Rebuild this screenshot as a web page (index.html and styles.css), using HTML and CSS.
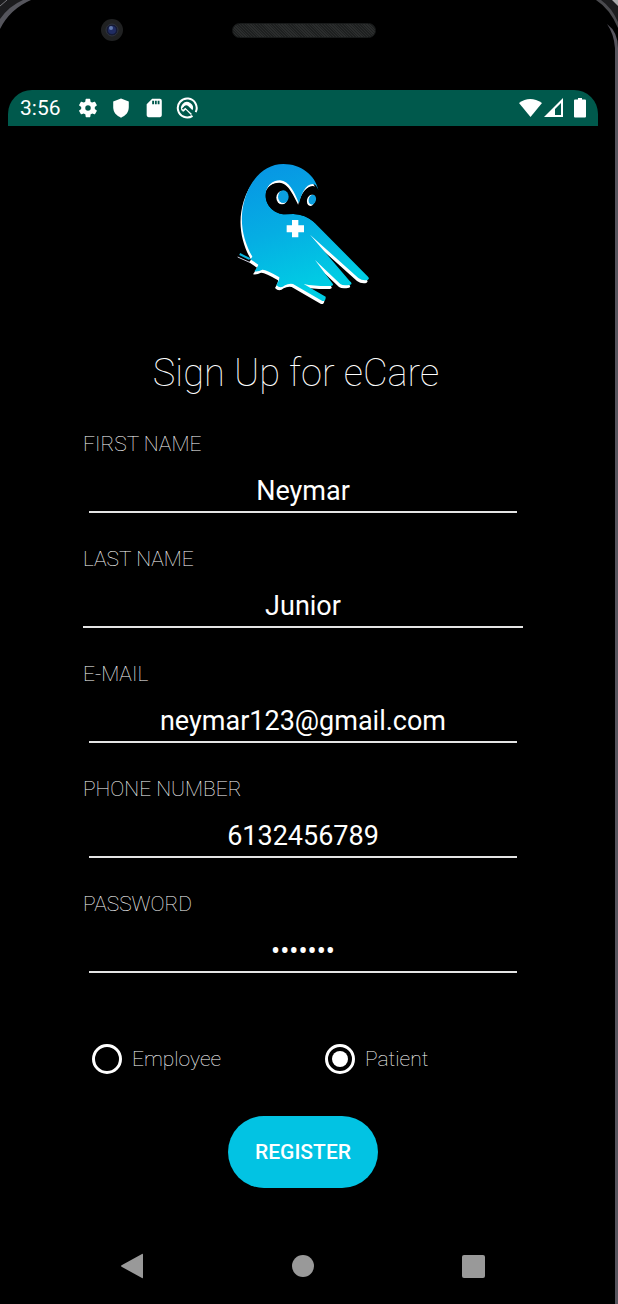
FILE: index.html
```html
<!DOCTYPE html>
<html lang="en">
<head>
<meta charset="utf-8">
<meta name="viewport" content="width=device-width, initial-scale=1">
<title>eCare – Sign Up</title>
<link rel="stylesheet" href="styles.css">
</head>
<body>
<div class="device">
  <svg class="corner corner-left" width="32" height="32" viewBox="0 0 32 32" aria-hidden="true">
    <path d="M0 0H31Q10 9 0 29Z" fill="#55555c"/>
    <path d="M0 0H23Q9 6 0 19Z" fill="#1c1c1e"/>
    <path d="M0 6L7 0" stroke="#77777c" stroke-width="1"/>
  </svg>
  <svg class="corner corner-right" width="32" height="48" viewBox="0 0 32 48" aria-hidden="true">
    <path d="M10 0H32V28Q24 9 10 0Z" fill="#4a4a4e"/>
    <path d="M15 0H32V22Q26 8 15 0Z" fill="#1c1c1e"/>
    <path d="M26 0H32V6Z" fill="#a8a8aa"/>
    <path d="M21 24Q32 32 32 48H29Q28 34 21 24Z" fill="#57555e"/>
  </svg>
  <div class="edge"></div>
  <header class="bezel">
    <svg class="camera" width="24" height="24" viewBox="0 0 24 24" aria-hidden="true">
      <circle cx="12" cy="12" r="11" fill="#202122"/>
      <circle cx="12" cy="12" r="6" fill="#151a35" stroke="#30343d"/>
      <circle cx="12" cy="12" r="4" fill="#202c62"/>
      <circle cx="11" cy="10" r="2" fill="#6077a9"/>
    </svg>
    <div class="speaker"></div>
  </header>

  <div class="screen">
    <div class="status">
      <span class="clock">3:56</span>
      <div class="notices">
        <svg width="22" height="22" viewBox="0 0 24 24" aria-label="Settings"><path fill-rule="evenodd" d="M19.4 13a7.500 7.500 0 0 0 0-2l2.100-1.600a.5.5 0 0 0 .1-.7l-2-3.400a.5.5 0 0 0-.6-.2l-2.500 1a7.300 7.300 0 0 0-1.700-1l-.4-2.600a.5.5 0 0 0-.5-.5h-4a.5.5 0 0 0-.5.5L9 5.100a7.700 7.700 0 0 0-1.700 1l-2.400-1a.5.5 0 0 0-.6.200l-2 3.400a.5.5 0 0 0 .1.700L4.600 11a8 8 0 0 0 0 2l-2.200 1.600a.5.5 0 0 0-.1.700l2 3.400c.1.200.4.300.6.200l2.500-1a7.300 7.300 0 0 0 1.700 1l.4 2.600c0 .3.200.5.5.5h4c.2 0 .5-.2.500-.5l.4-2.600a7.700 7.700 0 0 0 1.700-1l2.400 1c.2.100.5 0 .6-.2l2-3.400a.5.5 0 0 0-.1-.7zM12 15a3 3 0 1 1 0-6 3 3 0 0 1 0 6z"/></svg>
        <svg width="22" height="22" viewBox="0 0 24 24" aria-label="Protected"><path d="M12 1.500l8.500 3.500v6c0 6-3.500 9.500-8.500 11.500C7 20.500 3.500 17 3.500 11V5z"/></svg>
        <svg width="22" height="22" viewBox="0 0 24 24" aria-label="SD card"><path fill-rule="evenodd" d="M18.500 2H10L4 8v12a2 2 0 0 0 2 2h12.500a2 2 0 0 0 2-2V4a2 2 0 0 0-2-2zM12 8h-2V4h2zm3 0h-2V4h2zm3 0h-2V4h2z"/></svg>
        <svg width="22" height="22" viewBox="0 0 24 24" aria-label="Debugging"><path d="M18 20.500A10.300 10.300 0 1 1 21.500 16.500" fill="none" stroke="#fff" stroke-width="2.200"/><path d="M7 16A6.500 6.500 0 1 1 18 14.500L13 9.500Q10 8 8.500 11Z"/><path d="M7.500 15.500L10.500 12.500L17 19" fill="none" stroke="#fff" stroke-width="2"/><path d="M7 13L10 10.500L18 18" fill="none" stroke="#00594c" stroke-width="1.500"/></svg>
      </div>
      <div class="signals">
        <svg width="23" height="20" viewBox="0 0 23 20" aria-label="Wi-Fi"><path d="M0 5Q11 -3 23 5L11.500 19Z"/></svg>
        <svg width="20" height="20" viewBox="0 0 20 20" aria-label="Mobile signal"><path fill-rule="evenodd" d="M0 19L19 0V19ZM11 17H17V5L11 11Z"/></svg>
        <svg class="battery" width="12" height="20" viewBox="0 0 12 20" aria-label="Battery"><path d="M4 0H8V1.500H11Q12 1.500 12 2.500V18.500Q12 19.500 11 19.500H1Q0 19.500 0 18.500V2.500Q0 1.500 1 1.500H4Z"/></svg>
      </div>
    </div>

    <main class="content">
      <svg class="logo" width="138" height="165" viewBox="27 0 414 495" role="img" aria-label="eCare owl">
        <defs>
          <linearGradient id="sky" x1="0.3" y1="0" x2="0.6" y2="1">
            <stop offset="0" stop-color="#0797e4"/>
            <stop offset="0.45" stop-color="#05aee3"/>
            <stop offset="0.9" stop-color="#00cde4"/>
          </linearGradient>
          <path id="owl" d="M280 120C270 75 228 42 175 42C122 42 78 84 60 145C40 210 54 270 82 320L76 328L100 344Q98 350 88 364Q100 366 112 359Q124 358 163 382Q164 388 154 405Q166 418 180 406Q190 400 204 402L292 453Q303 454 302 440L236 402Q270 409 318 408Q328 406 322 400L270 330L346 402Q356 409 376 404Q384 401 374 393L255 254L400 384Q412 393 428 390Q435 386 429 380L264 214Q240 193 205 192L180 193C150 193 122 168 122 136C122 108 142 91 165 91C193 93 207 125 222 160C230 132 240 102 264 102C273 103 276 112 280 120Z"/>
        </defs>
        <use href="#owl" x="-4" y="9" fill="#fff"/>
        <use href="#owl" fill="url(#sky)"/>
        <path d="M122 138C122 110 142 98 163 98C192 100 205 137 223 170C230 139 243 108 262 108Q274 108 281 122L300 150L270 218Q240 193 205 192L180 193C150 193 122 168 122 138Z" fill="#000"/>
        <ellipse cx="171" cy="143" rx="17" ry="20" fill="#fff"/>
        <ellipse cx="175" cy="140" rx="16" ry="19" fill="#0b9fdf"/>
        <ellipse cx="258" cy="151" rx="12" ry="17" fill="#fff" transform="rotate(15 258 151)"/>
        <ellipse cx="262" cy="149" rx="11" ry="15" fill="#0b9fdf" transform="rotate(15 262 149)"/>
        <path d="M201 210H220V226H237V247H220V262H201V247H185V226H201Z" fill="#fff"/>
        <path d="M44 312L74 327" stroke="#09b5df" stroke-width="6"/>
        <path d="M38 321L74 337" stroke="#ccd" stroke-width="3"/>
      </svg>

      <h1 class="title">Sign Up for eCare</h1>

      <form class="form">
        <div class="field">
          <label for="first">FIRST NAME</label>
          <input id="first" type="text" value="Neymar">
        </div>
        <div class="field wide">
          <label for="last">LAST NAME</label>
          <input id="last" type="text" value="Junior">
        </div>
        <div class="field">
          <label for="email">E-MAIL</label>
          <input id="email" type="email" value="neymar123@gmail.com">
        </div>
        <div class="field">
          <label for="phone">PHONE NUMBER</label>
          <input id="phone" type="tel" value="6132456789">
        </div>
        <div class="field">
          <label for="password">PASSWORD</label>
          <input id="password" type="password" value="neymar1">
        </div>
        <div class="roles">
          <label class="role"><input type="radio" name="role" value="employee">Employee</label>
          <label class="role"><input type="radio" name="role" value="patient" checked>Patient</label>
        </div>
        <button class="register" type="button">REGISTER</button>
      </form>
    </main>

    <nav class="nav">
      <button type="button" aria-label="Back"><svg width="24" height="26" viewBox="0 0 24 26"><path d="M22 1Q23 0 23 2V24Q23 26 22 25L2 14Q0 13 2 12Z"/></svg></button>
      <button type="button" aria-label="Home"><svg width="24" height="26" viewBox="0 0 24 26"><circle cx="12" cy="13" r="11"/></svg></button>
      <button type="button" aria-label="Recent apps"><svg width="24" height="26" viewBox="0 0 24 26"><rect x="0" y="2" width="23" height="23" rx="2"/></svg></button>
    </nav>
  </div>
</div>
</body>
</html>
```

FILE: styles.css
```css
* { box-sizing: border-box; }

body {
  margin: 0;
  background: #000;
  color: #fff;
  font-family: Roboto, "Liberation Sans", sans-serif;
}

.device {
  position: relative;
  display: flex;
  flex-direction: column;
  min-height: 100vh;
  padding: 0 20px 0 8px;
  background: #000;
}

.corner { position: absolute; top: 0; }
.corner-left { left: 0; }
.corner-right { right: 0; }

.edge {
  position: absolute;
  top: 48px;
  right: 0;
  bottom: 0;
  width: 3px;
  background: #57555e;
}

.bezel {
  display: grid;
  grid-template-columns: 1fr 144px 1fr;
  align-items: center;
  height: 90px;
  padding: 0 0 30px 2px;
}

.camera {
  justify-self: center;
  margin-right: 18px;
}

.speaker {
  height: 15px;
  border: 1px solid #181a1a;
  border-radius: 8px;
  background: repeating-linear-gradient(45deg, #1e2020 0 1px, #2b2d2d 1px 2px);
}

.screen {
  display: flex;
  flex: 1;
  flex-direction: column;
}

.status {
  display: flex;
  align-items: center;
  height: 36px;
  padding: 0 12px;
  border-radius: 24px 24px 0 0;
  background: #00594c;
  fill: #fff;
}

.clock {
  font-size: 21px;
  line-height: 36px;
}

.notices {
  display: flex;
  gap: 11px;
  margin-left: 16px;
}

.signals {
  display: flex;
  gap: 2px;
  margin-left: auto;
}

.battery { margin-left: 8px; }

.content {
  display: flex;
  flex-direction: column;
  align-items: center;
  padding-top: 24px;
}

.title {
  margin: 34px 0 0;
  padding-right: 14px;
  font-size: 38px;
  font-weight: 100;
  line-height: 48px;
}

.form {
  display: flex;
  flex-direction: column;
  gap: 32px;
  width: 100%;
  max-width: 440px;
  margin-top: 34px;
}

.field {
  display: flex;
  flex-direction: column;
  gap: 13px;
}

.field + .field { margin-top: 1px; }

.field label {
  font-size: 21px;
  font-weight: 100;
  line-height: 26px;
}

.field input {
  height: 43px;
  margin: 0 6px;
  padding: 0;
  border: 0;
  border-bottom: 2px solid #e4e4e4;
  border-radius: 0;
  outline: 0;
  background: transparent;
  color: #fff;
  font: 400 27px Roboto, sans-serif;
  text-align: center;
}

.field.wide input { margin: 0; }

.roles {
  display: grid;
  grid-template-columns: 1fr 1fr;
  gap: 26px;
  padding: 39px 0 10px 9px;
  margin-right: -9px;
}

.role {
  display: flex;
  align-items: center;
  gap: 10px;
  font-size: 21px;
  font-weight: 100;
  line-height: 30px;
}

.role input {
  display: grid;
  place-items: center;
  width: 30px;
  height: 30px;
  margin: 0;
  border: 3px solid #fff;
  border-radius: 50%;
  appearance: none;
}

.role input:checked::before {
  content: "";
  width: 16px;
  height: 16px;
  border-radius: 50%;
  background: #fff;
}

.register {
  align-self: center;
  width: 150px;
  height: 72px;
  padding: 0;
  border: 0;
  border-radius: 36px;
  background: #02c3e3;
  color: #fff;
  font: 500 21px Roboto, sans-serif;
}

.nav {
  display: flex;
  justify-content: space-around;
  margin-top: auto;
  padding: 0 38px 25px;
}

.nav button {
  display: flex;
  padding: 0;
  border: 0;
  background: transparent;
  fill: #999;
}
```
